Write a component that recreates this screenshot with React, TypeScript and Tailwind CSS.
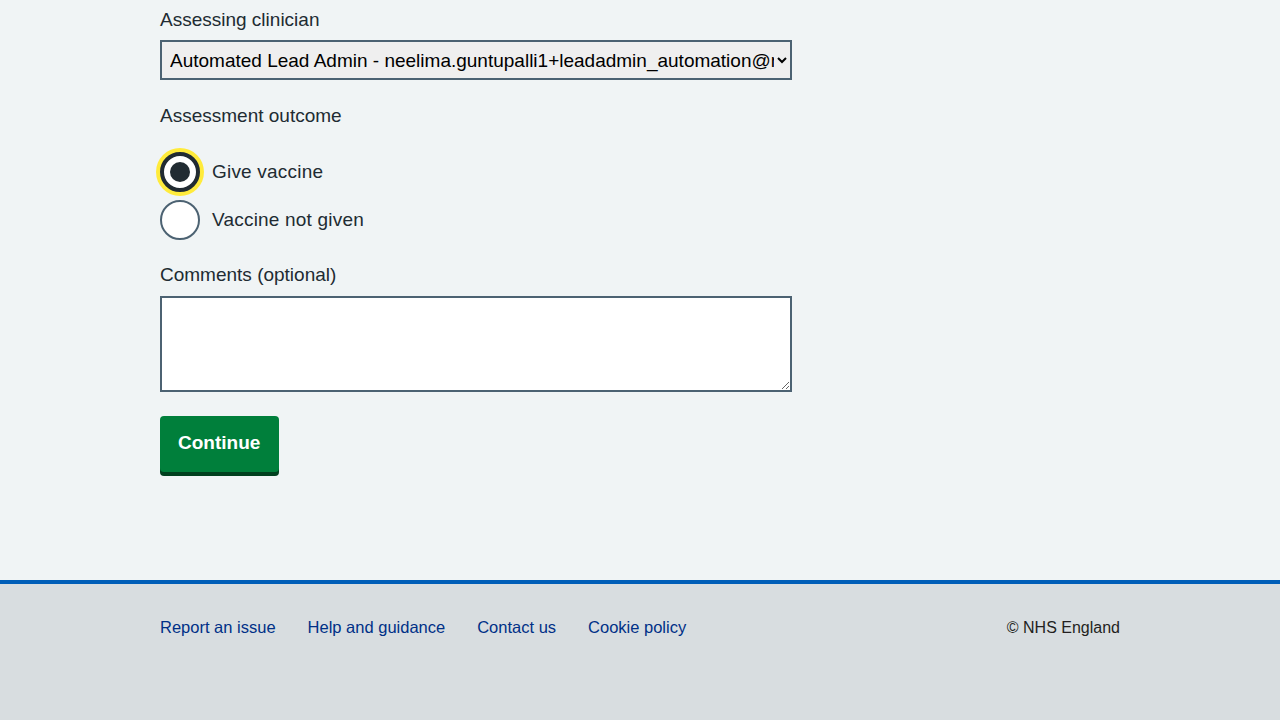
import { useState } from "react";

const footerLinks = ["Report an issue", "Help and guidance", "Contact us", "Cookie policy"];

const RadioItem = ({ label, checked, onSelect }: { label: string; checked: boolean; onSelect: () => void }) => {
    return (
        <label className="flex flex-row items-center gap-3 cursor-pointer" onClick={onSelect}>
            {checked ? (
                <span className="w-10 h-10 rounded-full border-4 border-[#212b32] bg-white shadow-[0_0_0_4px_#ffeb3b] flex items-center justify-center">
                    <span className="w-5 h-5 rounded-full bg-[#212b32]" />
                </span>
            ) : (
                <span className="w-10 h-10 rounded-full border-2 border-[#4c6272] bg-white" />
            )}
            <span className="text-[19px] leading-7 text-[#212b32] tracking-[0.2px]">{label}</span>
        </label>
    );
};

const App = () => {
    const [outcome, setOutcome] = useState<string>("give");
    const [comments, setComments] = useState<string>("");

    return (
        <div className="min-h-[720px] flex flex-col bg-[#f0f4f5] font-['Liberation_Sans',Arial,sans-serif] text-[#212b32]">
            <main className="w-[960px] mx-auto pt-[6px] pb-[108px]">
                <div className="w-[632px] flex flex-col">
                    <label className="text-[19px] leading-7 mb-[6px]">Assessing clinician</label>
                    <select className="h-10 w-full border-2 border-[#4c6272] bg-[#efefef] pl-1 text-[19px] text-black">
                        <option>Automated Lead Admin - neelima.guntupalli1+leadadmin_automation@nhs.net</option>
                    </select>

                    <div className="text-[19px] leading-7 mt-[22px]">Assessment outcome</div>
                    <div className="flex flex-col gap-2 mt-[22px]">
                        <RadioItem label="Give vaccine" checked={outcome === "give"} onSelect={() => setOutcome("give")} />
                        <RadioItem label="Vaccine not given" checked={outcome === "not"} onSelect={() => setOutcome("not")} />
                    </div>

                    <label className="text-[19px] leading-7 mt-[21px] mb-[7px]">Comments (optional)</label>
                    <textarea
                        className="h-24 w-full border-2 border-[#4c6272] bg-white p-1 text-[19px]"
                        value={comments}
                        onChange={e => setComments(e.target.value)}
                    />

                    <div className="mt-6">
                        <button className="bg-[#007f3b] text-white font-bold text-[19px] leading-7 pl-[18px] pr-[19px] pt-[13px] pb-[15px] rounded-[4px] shadow-[0_4px_0_#00401e]">
                            Continue
                        </button>
                    </div>
                </div>
            </main>

            <footer className="flex-1 bg-[#d8dde0] border-t-4 border-[#005eb8]">
                <div className="w-[960px] mx-auto pt-[31px] flex flex-row justify-between items-center">
                    <ul className="flex flex-row gap-8">
                        {footerLinks.map(link => (
                            <li key={link}>
                                <a href="#" className="text-[16.5px] leading-6 text-[#003087]">{link}</a>
                            </li>
                        ))}
                    </ul>
                    <p className="text-[16px] leading-6 text-[#231f20]">© NHS England</p>
                </div>
            </footer>
        </div>
    );
};

export default App;
